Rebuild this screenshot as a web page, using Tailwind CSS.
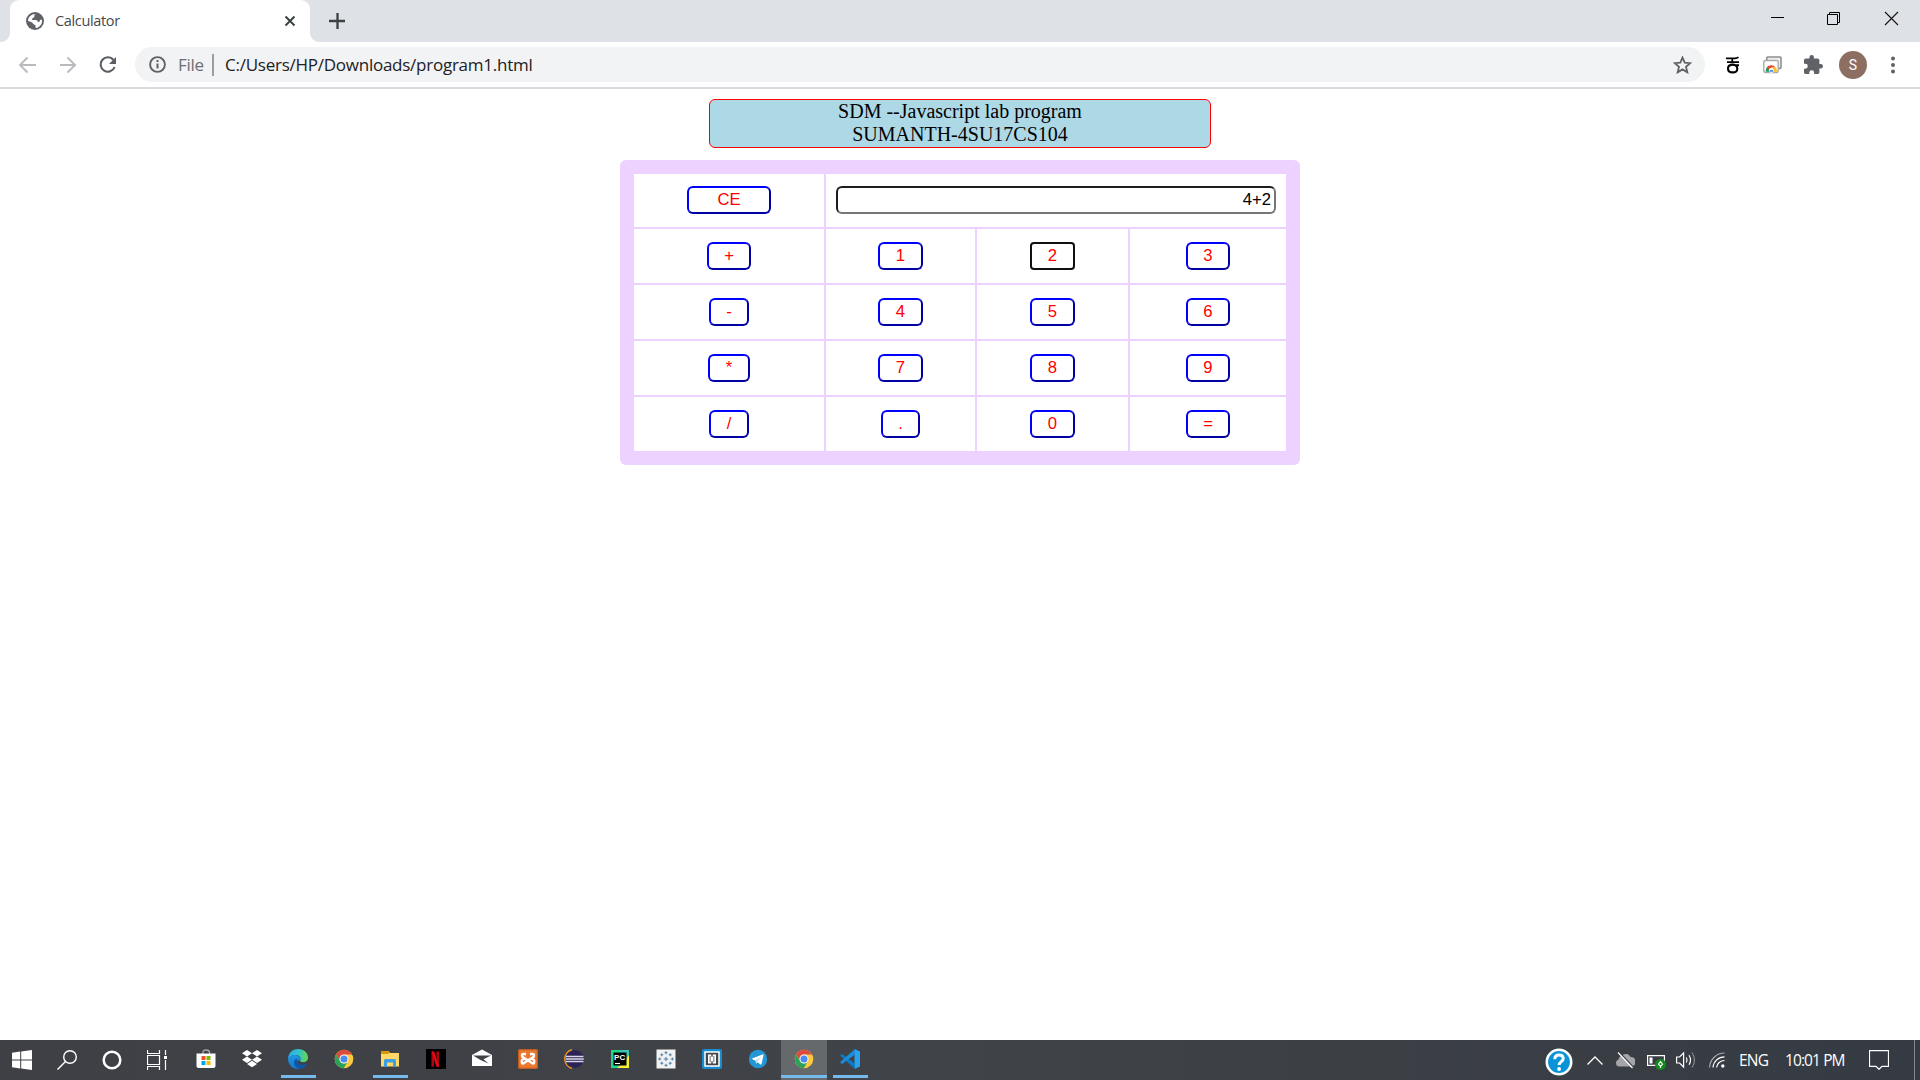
<!DOCTYPE html>
<html lang="en">
<head>
<meta charset="utf-8">
<title>Calculator</title>
<script src="https://cdn.jsdelivr.net/npm/@tailwindcss/browser@4"></script>
</head>
<body class="w-[1920px] h-[1080px] overflow-hidden bg-white flex flex-col font-['Open_Sans',sans-serif]">
<svg class="hidden">
  <symbol id="chrome" viewBox="0 0 20 20">
    <circle cx="10" cy="10" r="9.3" fill="#fbc940"/>
    <path d="M1.95 5.35A9.3 9.3 0 0 1 18.05 5.6H10a4.4 4.4 0 0 0-3.8 6.6z" fill="#dd4b3e"/>
    <path d="M1.95 5.35A9.3 9.3 0 0 0 9.8 19.3L13.8 12.2a4.4 4.4 0 0 1-7.6 0z" fill="#2aa25a"/>
    <circle cx="10" cy="10" r="4.5" fill="#f4f4f4"/><circle cx="10" cy="10" r="3.5" fill="#4a8af4"/>
  </symbol>
</svg>

<!-- Tab strip -->
<header class="h-[42px] shrink-0 bg-[#dee1e6] flex pl-[10px]">
  <div class="relative w-[300px] h-[42px] bg-white rounded-t-[9px] flex items-center pl-4 pr-[14px]">
    <svg class="absolute -left-[9px] bottom-0 w-[9px] h-[9px]" viewBox="0 0 9 9"><path d="M9 0v9H0a9 9 0 0 0 9-9z" fill="#fff"/></svg>
    <svg class="absolute -right-[9px] bottom-0 w-[9px] h-[9px]" viewBox="0 0 9 9"><path d="M0 0v9h9a9 9 0 0 1-9-9z" fill="#fff"/></svg>
    <svg class="w-[18px] h-5 shrink-0" viewBox="0 0 18 20"><circle cx="9" cy="10" r="9" fill="#5f6368"/><path d="M10 3C8.500 3.300 8 4.500 8.500 5.500 8.200 6.800 6.500 6.600 6.200 7.800c-.2.900 0 1.300 1 1.300h2.600c1.300 0 1.900.9 1.900 1.900 1.700.1 2.300-.7 2.400-1.900.7-.4 1.300-.4 1.900-.2.6 3.500-2 7.300-6 8.100-.6-.4-.5-1.300-.5-2.200 0-1.200-1.800-1-2.400-2C6.500 11.200 4.500 10.500 2 10 2 6 5.500 2.800 10 3z" fill="#fff"/></svg>
    <span class="ml-[11px] w-[66px] whitespace-nowrap text-[14.5px] leading-5 text-[#45484c] tracking-[-0.35px]">Calculator</span>
    <svg class="ml-auto w-3 h-3" viewBox="0 0 12 12"><path d="M1.500 1.500l9 9m0-9l-9 9" stroke="#3c4043" stroke-width="2"/></svg>
  </div>
  <svg class="mt-[13px] ml-[19px] w-4 h-4" viewBox="0 0 16 16"><path d="M8.500 0v16M0 8h16" stroke="#3c4043" stroke-width="2.300"/></svg>
  <div class="ml-auto flex items-start">
    <svg class="w-[56px] h-[38px]" viewBox="0 0 56 38"><path d="M21 17.500h13" stroke="#000" fill="none"/></svg>
    <svg class="w-[57px] h-[38px]" viewBox="0 0 57 38"><path d="M21.500 14.500h10v10h-10zM23.500 14.500v-2h10v10h-2" stroke="#000" fill="none"/></svg>
    <svg class="w-[57px] h-[38px]" viewBox="0 0 57 38"><path d="M22 12l13 13m0-13l-13 13" stroke="#111" stroke-width="1.100"/></svg>
  </div>
</header>

<!-- Toolbar -->
<nav class="h-[47px] shrink-0 border-b-2 border-[#d9dae0] flex items-center">
  <svg class="ml-[18px] w-[18px] h-[18px]" viewBox="0 0 18 18"><path d="M18 9H2m7.500-7.500L2 9l7.500 7.500" fill="none" stroke="#b8babd" stroke-width="1.900"/></svg>
  <svg class="ml-[23px] w-[18px] h-[18px]" viewBox="0 0 18 18"><path d="M1 9h16M8.500 1.500L16 9l-7.500 7.500" fill="none" stroke="#b8babd" stroke-width="1.900"/></svg>
  <svg class="ml-[21px] w-5 h-5" viewBox="0 0 20 20"><path d="M15.500 5A7.200 7.200 0 1 0 16.600 12" fill="none" stroke="#5a5e63" stroke-width="2.100"/><path d="M18 2v7h-7z" fill="#5a5e63"/></svg>
  <div class="ml-[17px] w-[1570px] h-[35px] rounded-full bg-[#f1f3f4] flex items-center pl-[14px] pr-[13px]">
    <svg class="w-[17px] h-[17px]" viewBox="0 0 17 17"><circle cx="8.500" cy="8.500" r="7.400" fill="none" stroke="#5f6368" stroke-width="1.900"/><path d="M8.500 7.500v5M8.500 4v2" stroke="#5f6368" stroke-width="2"/></svg>
    <span class="ml-[12px] w-[27px] whitespace-nowrap text-[17px] tracking-[-0.3px] text-[#6b6f74]">File</span>
    <span class="ml-[7px] w-[2px] h-[22px] bg-[#9a9da1]"></span>
    <span class="ml-[11px] whitespace-nowrap text-[17px] tracking-[-0.25px] text-[#202124]">C:/Users/HP/Downloads/program1.html</span>
    <svg class="ml-auto w-[19px] h-[18px]" viewBox="0 0 19 18"><path d="M9.500 1.600l2.200 5.100 5.500.5-4.200 3.600 1.300 5.500-4.800-2.900-4.800 2.900 1.300-5.500L1.800 7.200l5.500-.5z" fill="none" stroke="#5f6368" stroke-width="1.800"/></svg>
  </div>
  <svg class="ml-[21px] w-[14px] h-[18px]" viewBox="0 0 14 18"><path d="M0 2.300h9q2 0 3.500-1.200M6.300 2.300v4M1 6.200h12" fill="none" stroke="#000" stroke-width="1.700"/><path d="M13 9.300H9.500Q8.500 8.600 6.800 8.600 2 8.600 2 12.500t4.700 3.900 4.600-3.800q0-2.300-1.800-3.300" fill="none" stroke="#000" stroke-width="2.100"/></svg>
  <svg class="ml-[23px] w-[19px] h-[18px]" viewBox="0 0 19 18"><path d="M3.800 4V1.800q0-.8.8-.8h12.600q.8 0 .8.800v9.800q0 .8-.8.800H15" fill="#eee" stroke="#8f8f8f" stroke-width="1.600"/><rect x=".8" y="4.500" width="14.400" height="12" rx="1.500" fill="#fff" stroke="#aaa" stroke-width="1.400"/><path d="M2.800 15.800A5.500 5.500 0 0 1 5 10.500l2 5.300z" fill="#17a05d"/><path d="M3.800 11.500a5.300 5.300 0 0 1 8.800 0H8.200L6 14z" fill="#ea4335"/><path d="M9 11.500h4q1 2 .8 4.300H9z" fill="#fbc116"/><circle cx="8.300" cy="14.500" r="2.400" fill="#fff"/><path d="M6.300 15.800a2 2 0 1 1 4 0z" fill="#4285f4"/></svg>
  <svg class="ml-[22px] w-[19px] h-[19px]" viewBox="2 1 21 21"><path d="M20.500 11H19V7c0-1.100-.9-2-2-2h-4V3.500a2.500 2.500 0 0 0-5 0V5H4c-1.100 0-2 .9-2 2v3.800h1.500a2.700 2.700 0 0 1 0 5.400H2V20c0 1.100.9 2 2 2h3.800v-1.500a2.700 2.700 0 0 1 5.400 0V22H17c1.100 0 2-.9 2-2v-4h1.500a2.500 2.500 0 0 0 0-5z" fill="#5f6368"/></svg>
  <div class="ml-[16px] w-7 h-7 rounded-full bg-[#8d6e63] text-white text-center text-[14px] leading-[28px] font-[Roboto,sans-serif]">S</div>
  <svg class="ml-6 w-1 h-[18px]" viewBox="0 0 4 18"><g fill="#5f6368"><circle cx="2" cy="2.500" r="2"/><circle cx="2" cy="9" r="2"/><circle cx="2" cy="15.500" r="2"/></g></svg>
</nav>

<!-- Page -->
<main class="flex-1 flex flex-col items-center pt-[10px]">
  <div class="w-[502px] h-[49px] border border-[#f00] rounded-[6px] bg-[#add8e6] text-center font-['Liberation_Serif',serif] text-[20px] leading-[23px] text-black">SDM --Javascript lab program<br>SUMANTH-4SU17CS104</div>
  <div class="mt-3 w-[680px] h-[305px] rounded-[6px] bg-[#edd2ff] p-[14px] font-['Liberation_Sans',sans-serif] text-[16.67px] leading-[23px] text-[#f00] text-center grid grid-cols-[190px_149px_151px_156px] grid-rows-[53px_54px_54px_54px_54px] gap-[2px] *:bg-white *:flex *:justify-center *:items-center">
    <div class="pb-px"><button class="w-[84px] h-7 pb-px border-2 border-t-[#00f] border-l-[#00f] border-r-[#0000a5] border-b-[#0000a5] rounded-[6px]">CE</button></div>
    <div class="col-span-3 pb-px"><div class="w-[440px] h-7 border-2 border-t-[#1d1d1d] border-l-[#1d1d1d] border-r-[#767676] border-b-[#767676] rounded-[6px] text-right text-black pr-[3px]">4+2</div></div>
    <div><button class="w-[44px] h-7 pb-px border-2 border-t-[#00f] border-l-[#00f] border-r-[#0000a5] border-b-[#0000a5] rounded-[6px]">+</button></div>
    <div><button class="w-[45px] h-7 pb-px border-2 border-t-[#00f] border-l-[#00f] border-r-[#0000a5] border-b-[#0000a5] rounded-[6px]">1</button></div>
    <div><button class="w-[45px] h-7 pb-px border-2 border-[#101010] rounded-[4px]">2</button></div>
    <div><button class="w-[44px] h-7 pb-px border-2 border-t-[#00f] border-l-[#00f] border-r-[#0000a5] border-b-[#0000a5] rounded-[6px]">3</button></div>
    <div><button class="w-[40px] h-7 pb-px border-2 border-t-[#00f] border-l-[#00f] border-r-[#0000a5] border-b-[#0000a5] rounded-[6px]">-</button></div>
    <div><button class="w-[45px] h-7 pb-px border-2 border-t-[#00f] border-l-[#00f] border-r-[#0000a5] border-b-[#0000a5] rounded-[6px]">4</button></div>
    <div><button class="w-[45px] h-7 pb-px border-2 border-t-[#00f] border-l-[#00f] border-r-[#0000a5] border-b-[#0000a5] rounded-[6px]">5</button></div>
    <div><button class="w-[44px] h-7 pb-px border-2 border-t-[#00f] border-l-[#00f] border-r-[#0000a5] border-b-[#0000a5] rounded-[6px]">6</button></div>
    <div><button class="w-[42px] h-7 pb-px border-2 border-t-[#00f] border-l-[#00f] border-r-[#0000a5] border-b-[#0000a5] rounded-[6px]">*</button></div>
    <div><button class="w-[45px] h-7 pb-px border-2 border-t-[#00f] border-l-[#00f] border-r-[#0000a5] border-b-[#0000a5] rounded-[6px]">7</button></div>
    <div><button class="w-[45px] h-7 pb-px border-2 border-t-[#00f] border-l-[#00f] border-r-[#0000a5] border-b-[#0000a5] rounded-[6px]">8</button></div>
    <div><button class="w-[44px] h-7 pb-px border-2 border-t-[#00f] border-l-[#00f] border-r-[#0000a5] border-b-[#0000a5] rounded-[6px]">9</button></div>
    <div><button class="w-[40px] h-7 pb-px border-2 border-t-[#00f] border-l-[#00f] border-r-[#0000a5] border-b-[#0000a5] rounded-[6px]">/</button></div>
    <div><button class="w-[39px] h-7 pb-px border-2 border-t-[#00f] border-l-[#00f] border-r-[#0000a5] border-b-[#0000a5] rounded-[6px]">.</button></div>
    <div><button class="w-[45px] h-7 pb-px border-2 border-t-[#00f] border-l-[#00f] border-r-[#0000a5] border-b-[#0000a5] rounded-[6px]">0</button></div>
    <div><button class="w-[44px] h-7 pb-px border-2 border-t-[#00f] border-l-[#00f] border-r-[#0000a5] border-b-[#0000a5] rounded-[6px]">=</button></div>
  </div>
</main>

<!-- Taskbar -->
<footer class="h-10 shrink-0 bg-linear-to-r from-[#3e4046] via-[#404347] to-[#353b43] flex">
  <div class="flex *:w-[45px] *:h-10 *:flex *:justify-center *:items-center *:pr-px">
    <div><svg class="w-5 h-5" viewBox="0 0 20 20"><path d="M0 2.800L8.200 1.600v7.900H0zM9.200 1.500L20 0v9.500H9.200zM0 10.500h8.200v7.900L0 17.200zM9.200 10.500H20V20L9.200 18.500z" fill="#fff"/></svg></div>
    <div><svg class="w-5 h-5" viewBox="0 0 20 20"><g fill="none" stroke="#fff" stroke-width="1.400"><circle cx="13" cy="7" r="6.300"/><path d="M8.500 11.500L.5 19.600"/></g></svg></div>
    <div><svg class="w-5 h-5" viewBox="0 0 20 20"><circle cx="10" cy="10" r="8.300" fill="none" stroke="#fff" stroke-width="2.500"/></svg></div>
    <div><svg class="w-5 h-5" viewBox="0 0 20 20"><path d="M.5 0v3.500h12V0M.5 5.500h12v9H.5zM.5 20v-3.500h12V20M18.500 0v5M18.500 10v10" fill="none" stroke="#fff" stroke-width="1.200"/><path d="M17 6h3v3h-3z" fill="#fff"/></svg></div>
  </div>
  <div class="ml-[3px] flex *:w-[46px] *:h-10 *:relative *:flex *:justify-center *:items-center *:pb-[2px]">
    <div><svg class="w-5 h-5" viewBox="0 0 20 20"><path d="M7 5V3q0-2 3-2t3.500 2v2" fill="none" stroke="#aaa" stroke-width="1.300"/><path d="M.5 4.500h19V17q0 2-2 2h-15q-2 0-2-2z" fill="#fff"/><path d="M5.500 7H9.500v4h-4z" fill="#f25022"/><path d="M10.500 7h4v4h-4z" fill="#7fba00"/><path d="M5.500 12h4v4h-4z" fill="#00a4ef"/><path d="M10.500 12h4v4h-4z" fill="#ffb900"/></svg></div>
    <div><svg class="w-5 h-5" viewBox="0 0 20 20"><path d="M5 1l5 3.200L5 7.500 0 4.200zM15 1l5 3.200-5 3.300-5-3.300zM5 7.500l5 3.200-5 3.300-5-3.300zM15 7.500l5 3.200-5 3.300-5-3.300zM10 11.800l5 3.200-5 3.200L5 15z" fill="#fff"/></svg></div>
    <div><svg class="w-5 h-5" viewBox="0 0 20 20"><defs><linearGradient id="eg" x1="0" y1=".4" x2="1" y2=".5"><stop offset="0" stop-color="#2baee4"/><stop offset=".5" stop-color="#2fc2cc"/><stop offset="1" stop-color="#66d84e"/></linearGradient><linearGradient id="eb" x1="0" y1="0" x2="0" y2="1"><stop offset="0" stop-color="#2196e0"/><stop offset="1" stop-color="#1478cc"/></linearGradient></defs><path d="M0 10C.3 4 4.500 0 10 0c6 0 10 4 10 8.500 0 3-2.200 4.700-5 4.700-2 0-3.500-.9-2.800-2C13.500 9 11.500 6 7.500 6 3.500 6 .8 8 0 10z" fill="url(#eg)"/><path d="M0 10C.6 7.200 3.500 5.800 7 6c4 .2 6 3 5.300 5L8 12.500 12 19.800C5 21 0 16 0 10z" fill="url(#eb)"/><path d="M9.300 9.200c-1.200 5 4.200 8.300 9.400 5.500.5-.2.700.2.400.6C17.300 18 14.500 19.800 11.500 19.900 7.500 19.200 6 16 6 13.500c0-2 1.300-3.700 3.300-4.300z" fill="#0d57a6"/></svg><i class="absolute left-[6px] bottom-[2px] w-[35px] h-[3px] bg-[#76b9ed]"></i></div>
    <div><svg class="w-5 h-5"><use href="#chrome"/></svg></div>
    <div><svg class="w-5 h-5" viewBox="0 0 20 20"><path d="M1 2h7.500l1.500 2h9v13.500H1z" fill="#ffd867"/><path d="M1 2h7.500l1.200 1.800L8.200 5H1z" fill="#d8980a"/><path d="M4 18v-6.500q0-1.500 1.500-1.500h9q1.500 0 1.500 1.500V18h-3v-4.500H7V18z" fill="#3f9ee3"/></svg><i class="absolute left-[6px] bottom-[2px] w-[35px] h-[3px] bg-[#76b9ed]"></i></div>
    <div><svg class="w-5 h-5" viewBox="0 0 20 20"><path d="M0 0h20v20H0z" fill="#000"/><path d="M5.500 2.500H8V17.500l-2.500.4zM10.500 2.500H13v15.400l-2.500-.4z" fill="#b1060f"/><path d="M5.500 2.500H8.200L13 17.900l-2.600-.4z" fill="#e50914"/></svg></div>
    <div><svg class="w-5 h-5" viewBox="0 0 20 20"><path d="M0 6l10-5.500L20 6v11H0z" fill="#fff"/><path d="M1 6.400h18L11.500 10.300l5 4.200L8.500 11z" fill="#3f4348"/></svg></div>
    <div><svg class="w-5 h-5" viewBox="0 0 20 20"><rect width="20" height="20" rx="2.500" fill="#ea7a30"/><rect x=".7" y=".7" width="18.600" height="18.600" rx="2" fill="none" stroke="#b9561b"/><path d="M8 5H5.500Q4 5 4 6.500T5.500 8.500L14 14q1 1 1.800.3.500-.5.500-2T14.800 10H13.500M12 5h2.500Q16 5 16 6.500T14.500 8.500L6 14q-1 1-1.800.3-.5-.5-.5-2T5.200 10H6.500" fill="none" stroke="#fff" stroke-width="2.300"/></svg></div>
    <div><svg class="w-5 h-5" viewBox="0 0 20 20"><path d="M8 .7A9.600 9.600 0 0 0 8 19.300" fill="none" stroke="#f7941e" stroke-width="1.500"/><circle cx="10.800" cy="10" r="9" fill="#2c2255"/><path d="M2 7.500h17.500M1.800 10h18M2 12.500h17.500" stroke="#d9d7e6" stroke-width="1.500"/></svg></div>
    <div><svg class="w-5 h-5" viewBox="0 0 20 20"><path d="M1 1h18v18H1z" fill="#21d789"/><path d="M10 1h9v18H8z" fill="#3ac7b5"/><path d="M19 6v13H7l7-6z" fill="#f6ee38"/><path d="M3.500 3.500h13v13h-13z" fill="#000"/><path d="M5 14.500h5" stroke="#fff" stroke-width="1.100"/><text x="4.100" y="10.700" fill="#fff" font-family="Liberation Sans" font-size="8" font-weight="700">PC</text></svg></div>
    <div><svg class="w-5 h-5" viewBox="0 0 20 20"><path d="M.5.500h19v19H.5z" fill="#f2f2f2"/><path d="M10 7.800v4.400M7.800 10h4.400M10 2.200v3M8.500 3.700h3M10 14.800v3M8.500 16.300h3M3.700 8.500v3M2.200 10h3M16.300 8.500v3M14.800 10h3M5.800 4.300v3M4.300 5.800h3M14.200 4.300v3M12.700 5.800h3M5.800 12.700v3M4.300 14.200h3M14.200 12.700v3M12.700 14.200h3" stroke="#4c7fa8" stroke-width="1"/></svg></div>
    <div><svg class="w-5 h-5" viewBox="0 0 20 20"><rect width="20" height="20" rx="2" fill="#178dd0"/><path d="M3 3h14v14H3z" fill="#45484a" stroke="#fff" stroke-width="1.500"/><path d="M9.300 5.500H6v9h3.300v-1.700H7.700V7.200h1.600zM10.700 5.500H14v9h-3.300v-1.700h1.600V7.200h-1.600z" fill="#fff"/><path d="M8.500 7.500h3v5h-3z" fill="#fff"/></svg></div>
    <div><svg class="w-5 h-5" viewBox="0 0 20 20"><circle cx="10" cy="10" r="9.200" fill="#2297d4"/><path d="M3.500 9.800L15 5.300q.8 0 .5.900l-2 9q-.3.600-.9.300l-3-2.300-1.600 1.500-.4-3z" fill="#fff"/><path d="M7.600 11.500L13.500 7.500l-4.200 5-.8 2z" fill="#b8d7e8"/></svg></div>
    <div class="bg-[#66696c]"><svg class="w-5 h-5"><use href="#chrome"/></svg><i class="absolute left-0 bottom-[2px] w-[46px] h-[3px] bg-[#76b9ed]"></i></div>
    <div><svg class="w-5 h-5" viewBox="0 0 20 20"><path d="M14.500 0L20 2.500v15L14.500 20z" fill="#2aa3ef"/><path d="M0 6.500L2 5l13 9.500V20z" fill="#0d7ac4"/><path d="M0 13.300L2 15l13-9.500V0z" fill="#1b8ddb"/></svg><i class="absolute left-[6px] bottom-[2px] w-[35px] h-[3px] bg-[#76b9ed]"></i></div>
  </div>
  <div class="ml-auto flex items-center text-white text-[15.500px] pr-[5px]">
    <svg class="mt-1 w-[28px] h-[28px]" viewBox="0 0 28 28"><circle cx="14" cy="14" r="12.200" fill="#0a93d6" stroke="#fff" stroke-width="2.600"/><path d="M9.800 11.200q0-4.200 4.200-4.200t4.200 3.700c0 2.900-4.100 3-4.100 6.300" fill="none" stroke="#fff" stroke-width="3"/><circle cx="14.100" cy="21" r="1.900" fill="#fff"/></svg>
    <svg class="ml-[14px] w-4 h-[9px]" viewBox="0 0 16 9"><path d="M.5 8.500L8 1l7.500 7.500" fill="none" stroke="#fff" stroke-width="1.300"/></svg>
    <svg class="ml-3 w-5 h-[18px]" viewBox="0 0 20 18"><path d="M4 15.500a3.600 3.600 0 0 1-.5-7A4.500 4.500 0 0 1 7 4.800 5 5 0 0 1 15.500 6a4.700 4.700 0 0 1 1 9.500z" fill="#a3a5a8"/><path d="M4.500 1.500L18.500 16.500" stroke="#3b3f45" stroke-width="1.500"/><path d="M3 1.500L17.500 17" stroke="#fff" stroke-width="1.200"/></svg>
    <svg class="ml-[12px] mt-1 w-[19px] h-4" viewBox="0 0 19 16"><path d="M.600 1.600h16.800v9.800H.600z" fill="none" stroke="#fff" stroke-width="1.200"/><path d="M2.500 3.500h3v6h-3z" fill="#fff"/><circle cx="13.500" cy="10.500" r="5.500" fill="#128a1c"/><path d="M13.500 7.500l2 2.700-2 2.300-2-2.300zM13.500 11v3" fill="none" stroke="#fff" stroke-width="1.100"/></svg>
    <svg class="ml-[10px] w-5 h-[18px]" viewBox="0 0 20 18"><path d="M.600 6h3L7.600 2v14l-4-4h-3z" fill="none" stroke="#fff" stroke-width="1.200"/><path d="M10.300 6.500q1.500 2.500 0 5M13 4.300q3 4.700 0 9.400" fill="none" stroke="#fff" stroke-width="1.200"/><path d="M16 1.500q5 7.500 0 15" fill="none" stroke="#85888c" stroke-width="1.200"/></svg>
    <svg class="ml-[13px] w-4 h-4" viewBox="0 0 16 16"><g fill="none" stroke="#fff" stroke-width="1.200"><path d="M.600 15.500A15 15 0 0 1 15.500 1" stroke="#aaa"/><path d="M4 15.500A11.500 11.500 0 0 1 15.500 4.800M7.500 15.500a8 8 0 0 1 8-7"/></g><circle cx="13.800" cy="14" r="1.700" fill="#fff"/></svg>
    <span class="ml-[14px] mt-px w-[28px] whitespace-nowrap tracking-[-0.8px]">ENG</span>
    <span class="ml-[18px] mt-px w-[59px] whitespace-nowrap tracking-[-0.9px]">10:01 PM</span>
    <svg class="ml-[25px] w-5 h-5" viewBox="0 0 20 20"><path d="M.500.600h19v15.800h-6.500L10 19.300 7 16.400H.500z" fill="none" stroke="#fff" stroke-width="1.200"/></svg>
    <i class="ml-[25px] w-px h-10 bg-[#85888d]"></i>
  </div>
</footer>
</body>
</html>
